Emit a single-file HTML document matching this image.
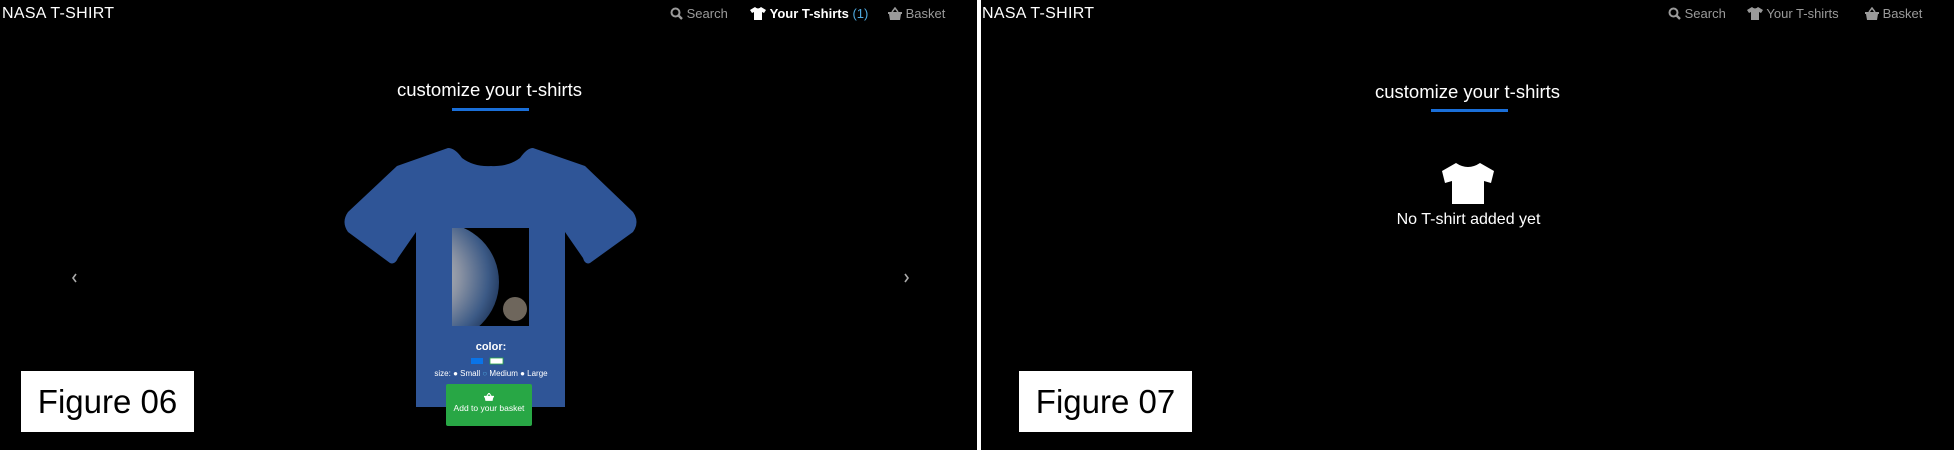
<!DOCTYPE html>
<html><head><meta charset="utf-8"><style>
*{margin:0;padding:0;box-sizing:border-box}
body{width:1954px;height:450px;background:#000;position:relative;overflow:hidden;font-family:"Liberation Sans",sans-serif;color:#fff}
.a{position:absolute;white-space:nowrap}
.brand{font-size:16px;top:5px;letter-spacing:0.3px}
.nav{font-size:13px;top:6px;color:#9a9a9a}
.nav b{color:#fff}
.ttl{font-size:18.5px;top:79px}
.ul{height:3px;background:#1a6fd9;top:108px;width:77px}
.fig{background:#fff;color:#000;font-size:33px;width:173px;height:61px;top:371px;line-height:61px;text-align:center}
</style></head><body>
<div class="a" style="left:977px;top:0;width:4px;height:450px;background:#fff"></div>

<!-- LEFT -->
<div class="a brand" style="left:2px">NASA T-SHIRT</div>
<div class="a nav" style="left:670px">
<svg width="13" height="13" viewBox="0 0 13 13" style="vertical-align:-2px"><circle cx="5.5" cy="5.5" r="4" fill="none" stroke="#9a9a9a" stroke-width="2"/><path d="M8.5 8.5L12 12" stroke="#9a9a9a" stroke-width="2.4"/></svg> Search</div>
<div class="a nav" style="left:750px"><svg width="16" height="13" viewBox="0 0 16 13" style="vertical-align:-2px"><path d="M5 0Q8 3 11 0L16 3 14 6 12 5 12 13 4 13 4 5 2 6 0 3Z" fill="#fff"/></svg> <b>Your T-shirts</b> <span style="color:#4ea8de">(1)</span></div>
<div class="a nav" style="left:888px"><svg width="14" height="13" viewBox="0 0 14 13" style="vertical-align:-2px"><path d="M4 5L7 1 10 5" fill="none" stroke="#9a9a9a" stroke-width="1.5"/><path d="M0 5H14V7H13L12 13H2L1 7H0Z" fill="#9a9a9a"/></svg> Basket</div>

<div class="a ttl" style="left:397px">customize your t-shirts</div>
<div class="a ul" style="left:452px"></div>

<svg class="a" style="left:0;top:0" width="977" height="450">
<defs>
<radialGradient id="e" cx="0.35" cy="0.45" r="0.7"><stop offset="0" stop-color="#d8d4c8"/><stop offset="0.45" stop-color="#8b93a3"/><stop offset="0.8" stop-color="#3c5a86"/><stop offset="1" stop-color="#1e3458"/></radialGradient>
<clipPath id="c"><rect x="452" y="228" width="77" height="98"/></clipPath>
</defs>
<path d="M448 148Q455 148 462 158Q474 167 491 166Q508 167 520 158Q527 148 533 148L585 166L633 212Q640 222 633 232L590 263Q585 265 583 258L565 232L565 407L416 407L416 232L398 258Q395 265 390 263L348 232Q341 222 348 212L397 166Z" fill="#2f5597"/>
<rect x="452" y="228" width="77" height="98" fill="#000"/>
<g clip-path="url(#c)">
<circle cx="440" cy="282" r="59" fill="url(#e)"/>
<circle cx="515" cy="309" r="12" fill="#6e665c"/>
</g>
<rect x="471" y="358" width="12" height="6" fill="#0a74e8"/>
<rect x="490" y="358" width="13" height="6" fill="#fff" stroke="#28a745" stroke-width="0.8"/>
<path d="M76 274L73 278L76 282" fill="none" stroke="#aaa" stroke-width="1.6"/>
<path d="M905 274L908 278L905 282" fill="none" stroke="#aaa" stroke-width="1.6"/>
</svg>
<div class="a" style="left:416px;top:341px;width:150px;text-align:center;font-size:11px;font-weight:bold">color:</div>
<div class="a" style="left:416px;top:369px;width:150px;text-align:center;font-size:8px">size: ● Small <span style="color:#4ea8de">○</span> Medium ● Large</div>
<div class="a" style="left:446px;top:384px;width:86px;height:42px;background:#28a745;border-radius:2px;text-align:center;font-size:8.5px;padding-top:9px">
<svg width="10" height="8" viewBox="0 0 14 11"><path d="M4 4L7 0 10 4" fill="none" stroke="#fff" stroke-width="1.5"/><path d="M0 4H14V6H13L12 11H2L1 6H0Z" fill="#fff"/></svg><br>Add to your basket</div>
<div class="a fig" style="left:21px">Figure 06</div>

<!-- RIGHT -->
<div class="a brand" style="left:982px">NASA T-SHIRT</div>
<div class="a nav" style="left:1668px"><svg width="13" height="13" viewBox="0 0 13 13" style="vertical-align:-2px"><circle cx="5.5" cy="5.5" r="4" fill="none" stroke="#9a9a9a" stroke-width="2"/><path d="M8.5 8.5L12 12" stroke="#9a9a9a" stroke-width="2.4"/></svg> Search</div>
<div class="a nav" style="left:1747px"><svg width="16" height="13" viewBox="0 0 16 13" style="vertical-align:-2px"><path d="M5 0Q8 3 11 0L16 3 14 6 12 5 12 13 4 13 4 5 2 6 0 3Z" fill="#9a9a9a"/></svg> Your T-shirts</div>
<div class="a nav" style="left:1865px"><svg width="14" height="13" viewBox="0 0 14 13" style="vertical-align:-2px"><path d="M4 5L7 1 10 5" fill="none" stroke="#9a9a9a" stroke-width="1.5"/><path d="M0 5H14V7H13L12 13H2L1 7H0Z" fill="#9a9a9a"/></svg> Basket</div>
<div class="a ttl" style="left:1375px;top:81px">customize your t-shirts</div>
<div class="a ul" style="left:1431px;top:109px"></div>
<svg class="a" style="left:1442px;top:163px" width="52" height="41" viewBox="0 0 52 41"><path d="M14 0Q26 8 38 0L52 8 49 20 42 18 42 41 10 41 10 18 3 20 0 8Z" fill="#fff"/></svg>
<div class="a" style="left:1388px;top:211px;width:161px;text-align:center;font-size:16px">No T-shirt added yet</div>
<div class="a fig" style="left:1019px">Figure 07</div>
</body></html>
